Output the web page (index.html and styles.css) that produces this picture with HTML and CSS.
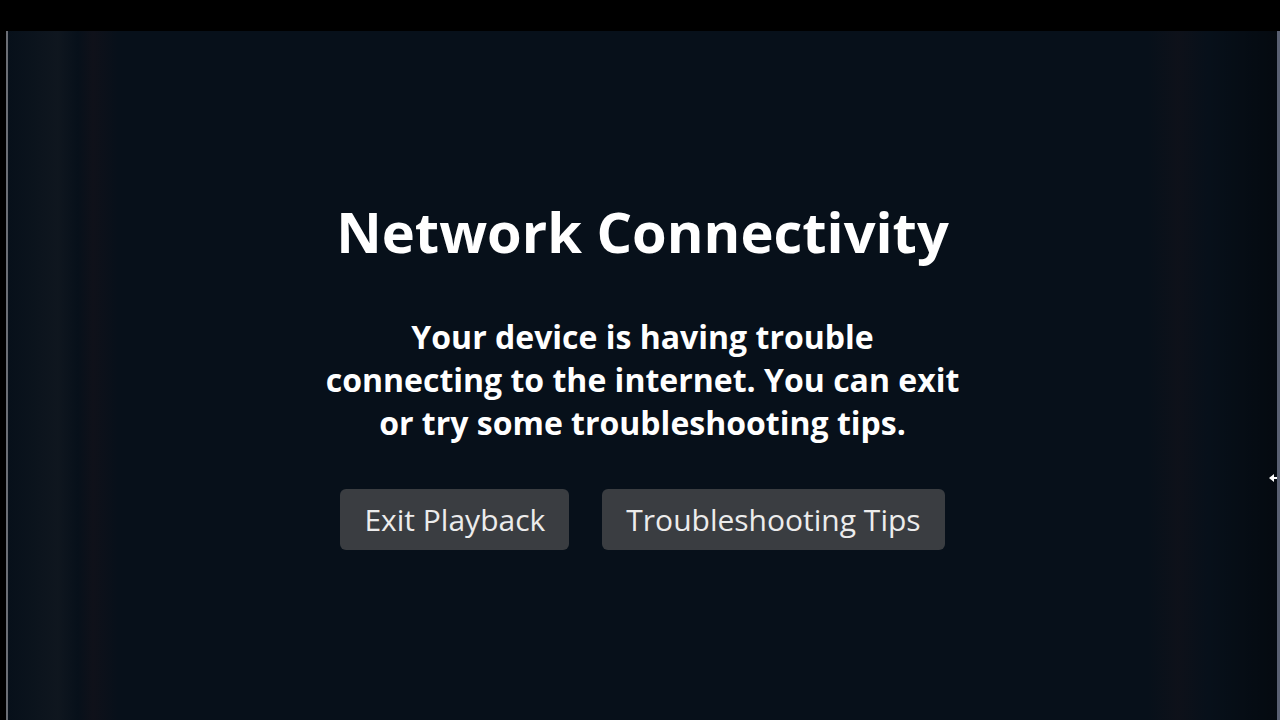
FILE: index.html
```html
<!DOCTYPE html>
<html lang="en">
<head>
    <meta charset="UTF-8">
    <meta name="viewport" content="width=device-width, initial-scale=1.0">
    <title>Network Connectivity</title>
    <link rel="stylesheet" href="styles.css">
</head>
<body>
    <div class="screen">
        <div class="frame">
            <div class="dialog">
                <h1 class="title">Network Connectivity</h1>
                <p class="message">Your device is having trouble<br>connecting to the internet. You can exit<br>or try some troubleshooting tips.</p>
                <div class="actions">
                    <button class="btn">Exit Playback</button>
                    <button class="btn">Troubleshooting Tips</button>
                </div>
            </div>
            <svg class="cursor" width="8" height="10" viewBox="0 0 8 10">
                <path d="M0 5 L5 1 L5 4 L8 4 L8 6 L5 6 L5 9 Z" fill="#fff"/>
            </svg>
        </div>
    </div>
</body>
</html>
```

FILE: styles.css
```css
html, body {
    margin: 0;
    height: 100%;
    background: #000;
    overflow: hidden;
}
.screen {
    padding-top: 31px;
    height: 689px;
    box-sizing: content-box;
}
.frame {
    position: relative;
    height: 100%;
    margin-left: 6px;
    border-left: 2px solid #6b6e75;
    border-right: 3px solid #596072;
    background:
        linear-gradient(90deg,
            rgba(20, 24, 30, 0.0) 0px,
            rgba(30, 34, 40, 0.35) 50px,
            rgba(12, 14, 20, 0.0) 70px,
            rgba(40, 20, 25, 0.25) 85px,
            rgba(10, 14, 22, 0.0) 110px,
            rgba(10, 14, 22, 0.0) 1140px,
            rgba(30, 20, 25, 0.3) 1170px,
            rgba(10, 14, 22, 0.0) 1200px,
            rgba(0, 0, 0, 0.4) 1269px),
        #07101a;
    display: flex;
    justify-content: center;
}
.dialog {
    padding-top: 164px;
    display: flex;
    flex-direction: column;
    align-items: center;
    font-family: "Open Sans", "Lato", sans-serif;
    font-variant-ligatures: none;
    color: #fff;
    text-align: center;
}
.title {
    margin: 0;
    font-size: 56px;
    font-weight: 700;
    line-height: 72px;
}
.message {
    margin: 48px 0 0;
    font-size: 32px;
    font-weight: 700;
    line-height: 43px;
}
.actions {
    display: flex;
    gap: 33px;
    margin-top: 45px;
}
.btn {
    background: #3a3d41;
    color: #ececec;
    border: none;
    border-radius: 6px;
    font-family: "Open Sans", "Lato", sans-serif;
    font-size: 30px;
    height: 61px;
    padding: 0 24px;
}
.cursor {
    position: absolute;
    right: 0;
    top: 442px;
}
```
